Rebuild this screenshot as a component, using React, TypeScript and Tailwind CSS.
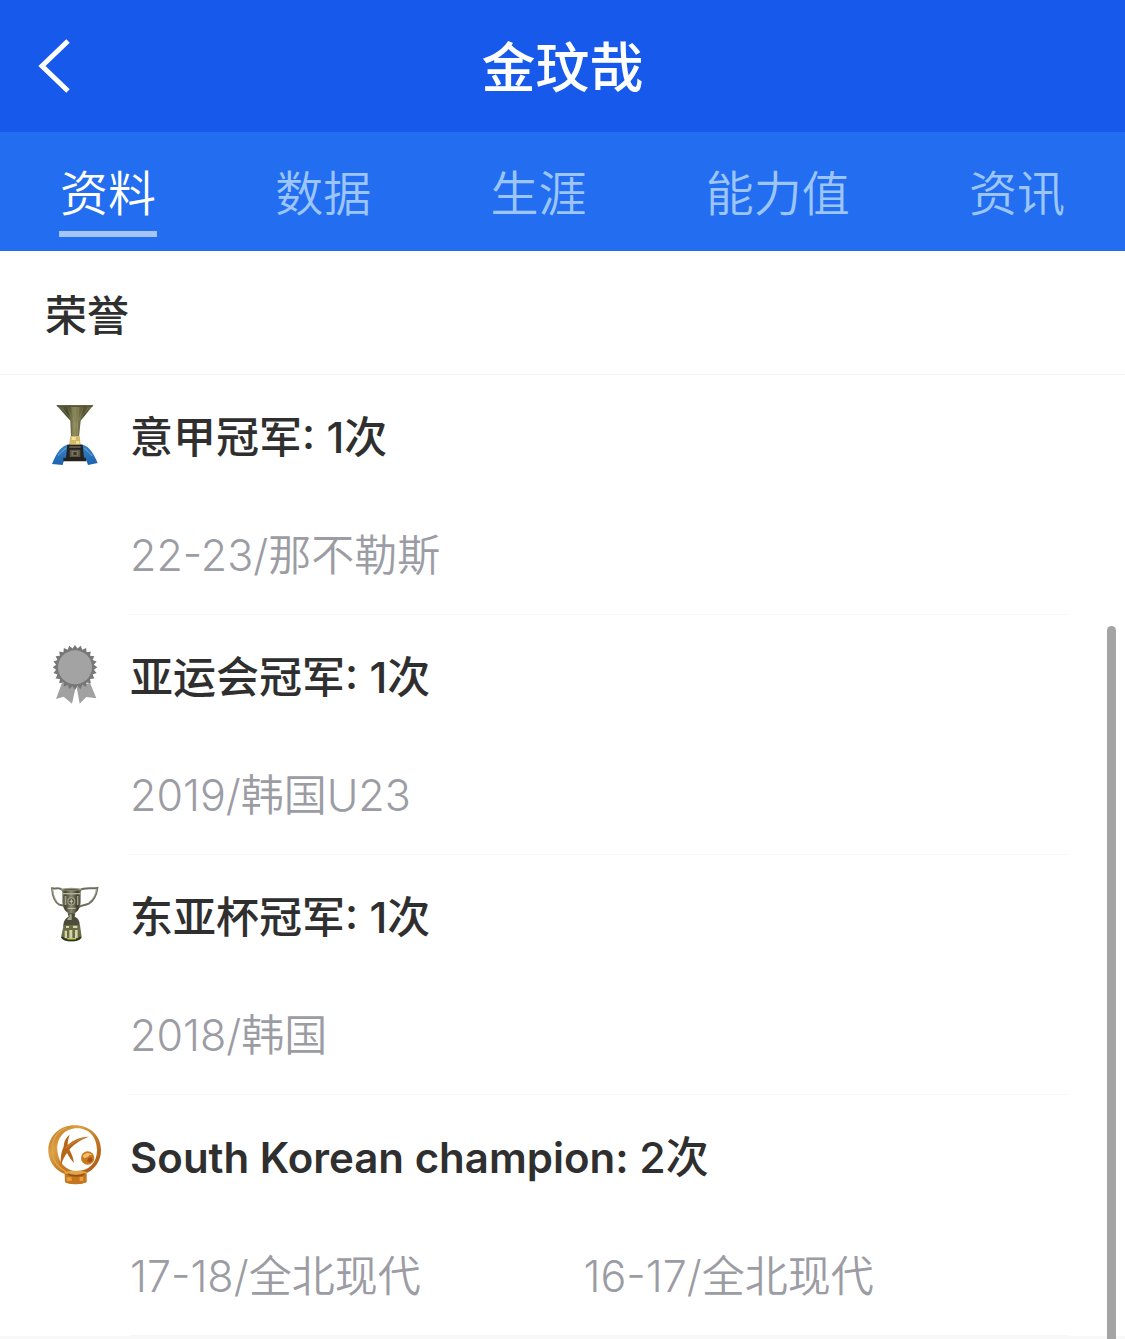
import { ReactNode, useState } from 'react';

type Honor = {
  name: string;
  count: string;
  icon: ReactNode;
  records: string[];
};

const SerieAIcon = () => (
  <svg viewBox="45 45 180 180" className="size-full" aria-hidden="true">
    <defs>
      <linearGradient id="cup" x1="0" x2="1" y1="0" y2="0">
        <stop offset="0" stopColor="#77754f" />
        <stop offset="0.3" stopColor="#45462a" />
        <stop offset="0.5" stopColor="#8d8a5c" />
        <stop offset="0.75" stopColor="#504e2f" />
        <stop offset="1" stopColor="#7b7750" />
      </linearGradient>
      <linearGradient id="ribbon" x1="0" x2="0" y1="0" y2="1">
        <stop offset="0" stopColor="#3b86c8" />
        <stop offset="1" stopColor="#1b62ad" />
      </linearGradient>
    </defs>
    <path d="M79 46H190L152 92L147 141H123L121 92Z" fill="url(#cup)" />
    <path d="M79 46H190L186 51H84Z" fill="#55563a" />
    <path d="M96 54L127 93M112 52L131 94M126 51L134 115M146 52L141 115M160 52L145 94M174 53L149 89" stroke="#a19d70" strokeWidth="2" opacity="0.6" />
    <path d="M129 96V138M135 96V138M142 96V138" stroke="#b4ab78" strokeWidth="2" opacity="0.6" />
    <path d="M121 138H149L152 166H117Z" fill="#d3b96a" />
    <path d="M125 141H137V150H125ZM138 154H148V161H138Z" fill="#f3e3a3" />
    <path d="M120 163C96 165 82 184 66 222L98 225C102 209 108 201 120 198Z" fill="url(#ribbon)" />
    <path d="M150 163C174 165 188 184 203 219L174 225C170 210 163 201 150 198Z" fill="url(#ribbon)" />
    <path d="M108 174L84 196M163 174L187 198" stroke="#6fb0e4" strokeWidth="3" />
    <path d="M112 164H158L162 203H168V214H100V203H108Z" fill="#24221d" />
    <path d="M118 168H152V174H118ZM119 179H151V201H119Z" fill="#5c564b" />
    <path d="M125 183H145V197H125Z" fill="#80765f" />
    <path d="M130 186H140V195H130Z" fill="#393630" />
  </svg>
);

const teeth = Array.from({ length: 48 }, (_, i) => {
  const radius = i % 2 === 0 ? 67 : 57;
  const angle = (i * Math.PI) / 24;
  return `${135 + radius * Math.cos(angle)},${112 + radius * Math.sin(angle)}`;
}).join(' ');

const RosetteIcon = () => (
  <svg viewBox="45 45 180 180" className="size-full" aria-hidden="true">
    <path d="M96 158L78 207L101 200L126 221L137 172Z" fill="#a1a1a1" />
    <path d="M140 172L149 221L169 201L199 205L180 158Z" fill="#a1a1a1" />
    <polygon points={teeth} fill="#777" />
    <circle cx="135" cy="112" r="51" fill="#a3a3a3" />
  </svg>
);

const EastAsianCupIcon = () => (
  <svg viewBox="45 45 180 180" className="size-full" aria-hidden="true">
    <defs>
      <linearGradient id="silver" x1="0" x2="1" y1="0" y2="0">
        <stop offset="0" stopColor="#8c8c78" />
        <stop offset="0.2" stopColor="#45452f" />
        <stop offset="0.5" stopColor="#8b8a72" />
        <stop offset="0.8" stopColor="#3d3d2b" />
        <stop offset="1" stopColor="#77765f" />
      </linearGradient>
    </defs>
    <path d="M97 60C88 51 78 57 66 55C68 78 76 97 88 104C96 108 101 103 107 112" fill="none" stroke="#6e6e60" strokeWidth="6" />
    <path d="M151 60C164 51 182 57 202 54C199 76 190 92 176 101C164 108 153 104 146 112" fill="none" stroke="#6e6e60" strokeWidth="6" />
    <path d="M67 56C70 78 77 95 89 102M200 56C197 75 188 90 174 99" fill="none" stroke="#c9c9b8" strokeWidth="2" />
    <path d="M93 57H155L152 66V96C151 117 140 130 125 133C109 130 98 117 97 96V66Z" fill="url(#silver)" />
    <ellipse cx="124" cy="58" rx="31" ry="5" fill="#9b9a84" />
    <ellipse cx="124" cy="59" rx="24" ry="2" fill="#56553f" />
    <path d="M99 69H150V73H99Z" fill="#b5b49c" />
    <path d="M104 78H109V105H104ZM141 78H145V105H141Z" fill="#a5a48c" />
    <circle cx="124" cy="94" r="12" fill="#a5a48c" />
    <circle cx="124" cy="94" r="9" fill="#5f614f" />
    <path d="M119 94H129M124 88V101M113 115H137" stroke="#c9c8b0" strokeWidth="3" />
    <path d="M113 130H136L134 140C148 146 150 157 149 170H100C100 157 103 146 116 140Z" fill="#4c4c3a" />
    <path d="M118 133H125V150H112C112 144 116 142 119 140Z" fill="#a9a890" />
    <path d="M101 165H150L155 202C151 218 97 218 93 202Z" fill="#6a6b47" />
    <path d="M108 168H117V174H108ZM129 167H142V174H129ZM104 182H111V204H104ZM118 180H127V207H118ZM135 180H143V204H135Z" fill="#d4d4a4" />
    <path d="M96 201C105 215 143 215 152 201" fill="none" stroke="#30341f" strokeWidth="5" />
    <path d="M112 206H138" stroke="#bccb59" strokeWidth="4" />
  </svg>
);

const KLeagueIcon = () => (
  <svg viewBox="45 45 180 180" className="size-full" aria-hidden="true">
    <defs>
      <linearGradient id="gold" x1="0" x2="1" y1="0" y2="1">
        <stop offset="0" stopColor="#b96d1b" />
        <stop offset="0.3" stopColor="#dba043" />
        <stop offset="0.6" stopColor="#c37520" />
        <stop offset="1" stopColor="#a85518" />
      </linearGradient>
    </defs>
    <path fillRule="evenodd" d="M134 46C181 46 213 78 213 121C213 162 181 197 135 197C89 197 55 165 55 121C55 77 91 46 134 46ZM142 55C104 55 81 83 82 119C84 155 107 183 141 183C177 183 201 158 201 121C201 83 178 55 142 55Z" fill="url(#gold)" />
    <path d="M110 53C82 63 66 87 67 121C68 149 83 173 108 185" fill="none" stroke="#e0a64b" strokeWidth="4" />
    <path d="M119 74C106 84 102 96 101 110C94 124 91 141 93 167C98 149 104 139 111 129C118 142 124 150 132 159C130 143 125 130 118 119C130 104 147 92 176 80C149 81 128 91 113 105C113 94 115 86 119 74Z" fill="#b7651b" />
    <path d="M108 113C126 98 147 88 165 83" fill="none" stroke="#cf8f3c" strokeWidth="3" />
    <circle cx="173" cy="144" r="20" fill="#c87922" />
    <path d="M158 138C165 125 183 127 187 136L179 135L172 142L162 144Z" fill="#f2bf68" />
    <path d="M174 145L184 141L188 150L181 158L171 154Z" fill="#a75117" />
    <path d="M104 187H170V216C160 225 113 225 105 216Z" fill="#c6751f" />
    <ellipse cx="137" cy="188" rx="34" ry="6" fill="#e0a648" />
    <path d="M113 192C128 200 151 199 164 191" fill="none" stroke="#98501b" strokeWidth="5" />
    <path d="M110 202H125V213H110ZM149 201H160V213H149Z" fill="#e6a040" />
  </svg>
);

const tabs = ['资料', '数据', '生涯', '能力值', '资讯'];

const honors: Honor[] = [
  { name: '意甲冠军', count: '1次', icon: <SerieAIcon />, records: ['22-23/那不勒斯'] },
  { name: '亚运会冠军', count: '1次', icon: <RosetteIcon />, records: ['2019/韩国U23'] },
  { name: '东亚杯冠军', count: '1次', icon: <EastAsianCupIcon />, records: ['2018/韩国'] },
  {
    name: 'South Korean champion',
    count: '2次',
    icon: <KLeagueIcon />,
    records: ['17-18/全北现代', '16-17/全北现代'],
  },
];

const HonorItem = ({ honor }: { honor: Honor }) => {
  const isLatin = /^[A-Za-z]/.test(honor.name);

  return (
    <li className="flex gap-[25px] pl-[45px] pr-14">
      <div className="mt-[30px] size-[60px] shrink-0">{honor.icon}</div>
      <div className="flex-1 border-b border-[#f7f7f7]">
        <h3 className="pt-[2px] text-[43px] leading-[120px] font-medium text-[#2f2f2f]">
          <span className={isLatin ? 'text-[42px] font-semibold' : ''}>
            {honor.name}:{' '}
          </span>
          {honor.count}
        </h3>
        <div className="grid grid-cols-2 pr-8">
          {honor.records.map(record => (
            <p
              key={record}
              className="whitespace-nowrap text-[43px] leading-[117px] font-[350] text-[#9c9ca4]">
              {record}
            </p>
          ))}
        </div>
      </div>
    </li>
  );
};

const App = () => {
  const [activeTab, setActiveTab] = useState<string>('资料');

  return (
    <main className="relative flex min-h-screen flex-col bg-[#f8f8f8] font-[Inter,'Noto_Sans_CJK_SC',sans-serif]">
      <header className="grid h-[132px] grid-cols-[1fr_auto_1fr] items-center bg-[#175aeb] px-9 text-white">
        <button type="button" aria-label="返回" className="justify-self-start">
          <svg viewBox="0 0 36 60" className="h-[60px] w-9" fill="none" stroke="currentColor" strokeWidth="5">
            <path d="M32 5L6 30L32 55" />
          </svg>
        </button>
        <h1 className="pt-[6px] text-[54px] leading-[80px] font-medium">金玟哉</h1>
      </header>
      <nav className="flex justify-between bg-[#236ef0] px-[59px] pt-[26px] pb-[14px]">
        {tabs.map(tab => (
          <button
            key={tab}
            type="button"
            onClick={() => setActiveTab(tab)}
            className={`border-b-6 px-px pb-px text-[48px] leading-[72px] font-[350] ${
              tab === activeTab
                ? 'border-[#a5c5f9] text-white'
                : 'border-transparent text-[#9cc5fb]'
            }`}>
            {tab}
          </button>
        ))}
      </nav>
      <section className="bg-white">
        <h2 className="border-b border-[#f3f3f3] px-[45px] pt-[6px] text-[42px] leading-[117px] font-medium text-[#2f2f2f]">
          荣誉
        </h2>
        <ul>
          {honors.map(honor => (
            <HonorItem key={honor.name} honor={honor} />
          ))}
        </ul>
      </section>
      <div className="absolute top-[626px] right-[9px] bottom-0 w-[9px] rounded-t-full bg-[#a4a4a4]" />
    </main>
  );
};

export default App;
